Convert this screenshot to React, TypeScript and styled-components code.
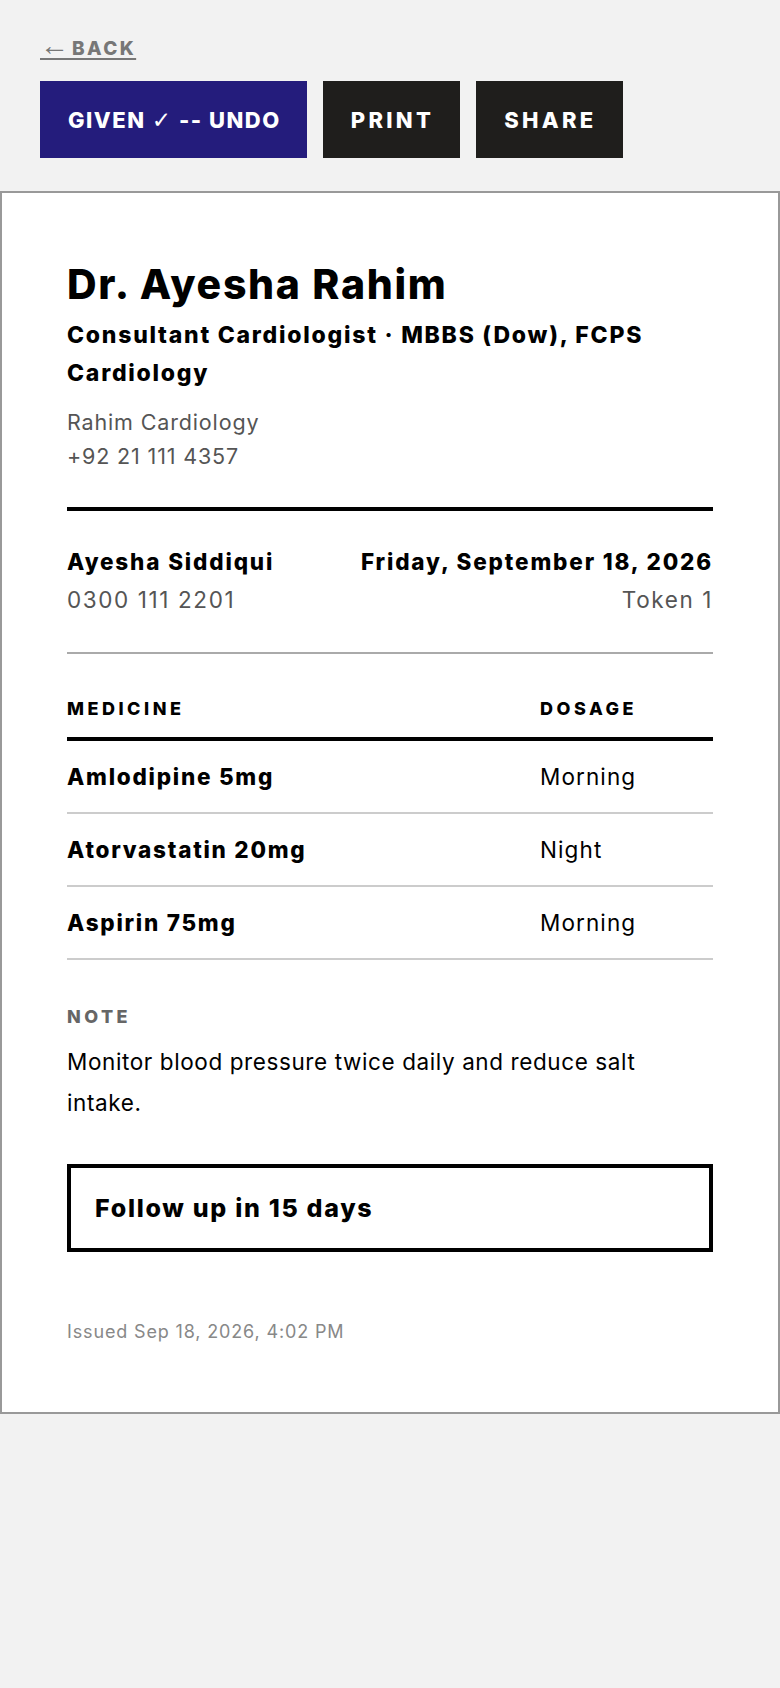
import styled, { createGlobalStyle } from "styled-components";

const GlobalStyle = createGlobalStyle`
  html, body {
    margin: 0;
    padding: 0;
    background: #f2f2f2;
    font-family: Inter, "Liberation Sans", Arial, sans-serif;
    color: #000;
  }
  * { box-sizing: border-box; }
`;

const Page = styled.div`
  min-height: 1688px;
  background: #f2f2f2;
`;

const TopBar = styled.div`
  padding: 38px 40px 33px;
  display: flex;
  flex-direction: column;
  gap: 21px;
`;

const BackLink = styled.a`
  align-self: flex-start;
  height: 22px;
  font-size: 19px;
  line-height: 22px;
  font-weight: 800;
  letter-spacing: 2.4px;
  color: #777;
  text-decoration: underline;
  text-underline-offset: 3px;
  text-decoration-thickness: 2px;
  cursor: pointer;
`;

const Arrow = styled.span`
  font-family: "Liberation Sans", "DejaVu Sans", sans-serif;
  font-weight: 400;
  font-size: 29px;
  line-height: 0;
  letter-spacing: 3px;
`;

const Actions = styled.div`
  display: flex;
  gap: 16px;
`;

const ActionButton = styled.button<{ $primary?: boolean }>`
  height: 77px;
  padding: 0 26px 0 28px;
  border: none;
  background: ${(p) => (p.$primary ? "#241c7c" : "#1f1e1c")};
  color: #fff;
  font-family: inherit;
  font-size: 22px;
  font-weight: 800;
  letter-spacing: ${(p) => (p.$primary ? "1.5px" : "3.3px")};
  cursor: pointer;
`;

const Check = styled.span`
  font-family: "DejaVu Sans", sans-serif;
  font-weight: 700;
  font-size: 23px;
  line-height: 0;
`;

const Card = styled.div`
  background: #fff;
  border: 2px solid #999;
  padding: 66px 65px 69px;
`;

const DoctorName = styled.h1`
  margin: 0;
  font-size: 41px;
  font-weight: 800;
  line-height: 50px;
  letter-spacing: 1.7px;
`;

const Credentials = styled.div`
  margin-top: 7px;
  font-size: 23px;
  font-weight: 800;
  line-height: 38px;
  letter-spacing: 1.75px;
`;

const ClinicInfo = styled.div`
  margin-top: 13px;
  margin-bottom: 34px;
`;

const ClinicLine = styled.div`
  font-size: 21.5px;
  color: #555;
  line-height: 34px;
  letter-spacing: 0.85px;
`;

const ThickRule = styled.hr`
  margin: 0;
  border: none;
  border-top: 4px solid #000;
`;

const ThinRule = styled.hr`
  margin: 0;
  border: none;
  border-top: 2px solid #aaa;
`;

const PatientRow = styled.div`
  display: flex;
  justify-content: space-between;
  padding: 32px 0 33px;
`;

const PatientCol = styled.div<{ $right?: boolean }>`
  display: flex;
  flex-direction: column;
  align-items: ${(p) => (p.$right ? "flex-end" : "flex-start")};
`;

const StrongText = styled.div`
  font-size: 22.5px;
  font-weight: 800;
  line-height: 38px;
  letter-spacing: 1.85px;
`;

const MutedText = styled.div`
  font-size: 22.5px;
  color: #555;
  line-height: 38px;
  letter-spacing: 1.6px;
`;

const Table = styled.div`
  margin-top: 44px;
`;

const TableHead = styled.div`
  display: grid;
  grid-template-columns: 1fr 173px;
  padding-bottom: 17px;
  border-bottom: 4px solid #000;
`;

const HeadCell = styled.div`
  font-size: 18px;
  line-height: 22px;
  font-weight: 800;
  letter-spacing: 3.5px;
`;

const TableRow = styled.div`
  display: grid;
  grid-template-columns: 1fr 173px;
  align-items: center;
  height: 73px;
  border-bottom: 2px solid #ccc;
`;

const MedName = styled.div`
  font-size: 22.5px;
  font-weight: 800;
  letter-spacing: 1.75px;
`;

const Dose = styled.div`
  font-size: 22.5px;
  letter-spacing: 1.1px;
`;

const NoteLabel = styled.div`
  margin-top: 46px;
  font-size: 18px;
  line-height: 22px;
  font-weight: 800;
  letter-spacing: 3.4px;
  color: #666;
`;

const NoteText = styled.p`
  margin: 13px 0 0;
  font-size: 22.5px;
  line-height: 41px;
  letter-spacing: 0.6px;
  padding-right: 50px;
`;

const FollowUp = styled.div`
  margin-top: 41px;
  border: 4px solid #000;
  padding: 0 24px;
  height: 88px;
  display: flex;
  align-items: center;
  font-size: 25px;
  font-weight: 800;
  letter-spacing: 1.7px;
`;

const Issued = styled.div`
  margin-top: 69px;
  font-size: 18px;
  line-height: 22px;
  color: #888;
  letter-spacing: 0.85px;
`;

const medicines = [
  { name: "Amlodipine 5mg", dose: "Morning" },
  { name: "Atorvastatin 20mg", dose: "Night" },
  { name: "Aspirin 75mg", dose: "Morning" },
];

export default function App() {
  return (
    <Page>
      <GlobalStyle />
      <TopBar>
        <BackLink>
          <Arrow>←</Arrow>BACK
        </BackLink>
        <Actions>
          <ActionButton $primary>
            GIVEN <Check>✓</Check> -- UNDO
          </ActionButton>
          <ActionButton>PRINT</ActionButton>
          <ActionButton>SHARE</ActionButton>
        </Actions>
      </TopBar>

      <Card>
        <DoctorName>Dr. Ayesha Rahim</DoctorName>
        <Credentials>Consultant Cardiologist · MBBS (Dow), FCPS Cardiology</Credentials>
        <ClinicInfo>
          <ClinicLine>Rahim Cardiology</ClinicLine>
          <ClinicLine>+92 21 111 4357</ClinicLine>
        </ClinicInfo>

        <ThickRule />

        <PatientRow>
          <PatientCol>
            <StrongText>Ayesha Siddiqui</StrongText>
            <MutedText>0300 111 2201</MutedText>
          </PatientCol>
          <PatientCol $right>
            <StrongText>Friday, September 18, 2026</StrongText>
            <MutedText>Token 1</MutedText>
          </PatientCol>
        </PatientRow>

        <ThinRule />

        <Table>
          <TableHead>
            <HeadCell>MEDICINE</HeadCell>
            <HeadCell>DOSAGE</HeadCell>
          </TableHead>
          {medicines.map((m) => (
            <TableRow key={m.name}>
              <MedName>{m.name}</MedName>
              <Dose>{m.dose}</Dose>
            </TableRow>
          ))}
        </Table>

        <NoteLabel>NOTE</NoteLabel>
        <NoteText>Monitor blood pressure twice daily and reduce salt intake.</NoteText>

        <FollowUp>Follow up in 15 days</FollowUp>

        <Issued>Issued Sep 18, 2026, 4:02 PM</Issued>
      </Card>
    </Page>
  );
}
